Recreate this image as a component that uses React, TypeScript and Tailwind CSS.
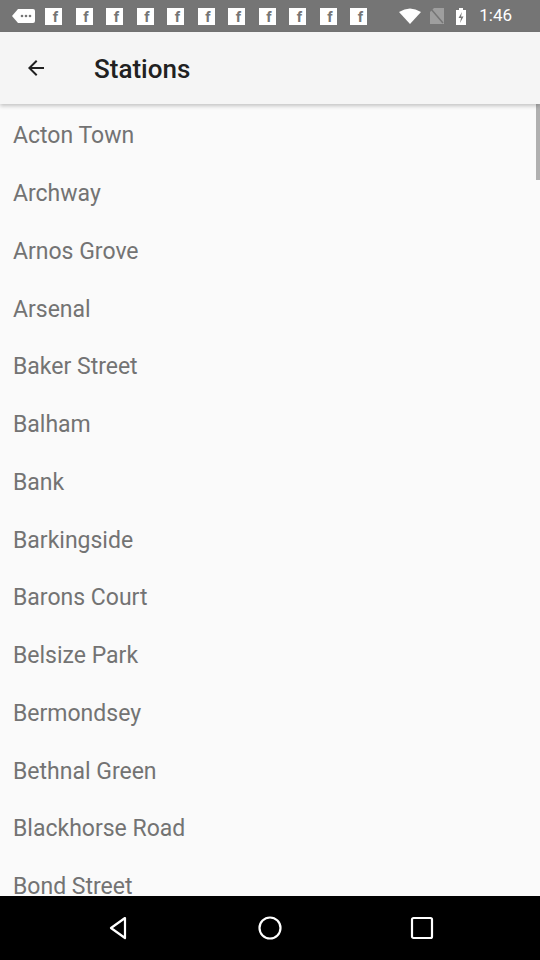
import React from "react";

const stations = [
  "Acton Town",
  "Archway",
  "Arnos Grove",
  "Arsenal",
  "Baker Street",
  "Balham",
  "Bank",
  "Barkingside",
  "Barons Court",
  "Belsize Park",
  "Bermondsey",
  "Bethnal Green",
  "Blackhorse Road",
  "Bond Street",
];

function FbIcon() {
  return (
    <div className="w-[17px] h-[17px] bg-white flex items-end justify-center overflow-hidden">
      <span className="text-[#757575] font-bold text-[15px] leading-[15px] translate-x-[2px]">f</span>
    </div>
  );
}

function StatusBar() {
  return (
    <div className="h-8 bg-[#757575] flex items-center pl-3 pr-[28px] shrink-0">
      <svg width="23" height="14" viewBox="0 0 23 14">
        <path d="M6 0 H21 a2 2 0 0 1 2 2 V12 a2 2 0 0 1 -2 2 H6 L0 7 Z" fill="#fff" />
        <circle cx="10" cy="7" r="1.3" fill="#757575" />
        <circle cx="14" cy="7" r="1.3" fill="#757575" />
        <circle cx="18" cy="7" r="1.3" fill="#757575" />
      </svg>
      <div className="flex gap-[13.5px] ml-[10px]">
        {Array.from({ length: 11 }).map((_, i) => (
          <FbIcon key={i} />
        ))}
      </div>
      <div className="flex-1" />
      <svg width="22" height="16" viewBox="0 0 22 16">
        <path d="M0 4 Q11 -3 22 4 L11 16 Z" fill="#fff" />
      </svg>
      <svg width="14" height="16" viewBox="0 0 14 16" className="ml-[9px]">
        <path d="M4 0 H14 V16 H0 V4 Z" fill="#9e9e9e" />
        <path d="M1 1 L13 15" stroke="#757575" strokeWidth="1.5" />
      </svg>
      <svg width="10" height="17" viewBox="0 0 10 17" className="ml-[12px]">
        <rect x="3" y="0" width="4" height="2" fill="#fff" />
        <rect x="0" y="2" width="10" height="15" fill="#fff" />
        <path d="M6 4 L2.5 10 H5 L4 15 L7.5 8.5 H5 Z" fill="#757575" />
      </svg>
      <span className="ml-[13px] text-white text-[17px]">1:46</span>
    </div>
  );
}

function AppBar() {
  return (
    <div className="h-[72px] bg-[#f5f5f5] flex items-center shrink-0 relative z-10 shadow-[0_2px_4px_rgba(0,0,0,0.22)]">
      <svg width="24" height="24" viewBox="0 0 24 24" className="ml-6">
        <path d="M20 11H7.83l5.59-5.59L12 4l-8 8 8 8 1.41-1.41L7.83 13H20v-2z" fill="#212121" />
      </svg>
      <h1 className="ml-[46px] text-[26px] font-medium text-[#212121] leading-none mt-[2px]">Stations</h1>
    </div>
  );
}

function NavBar() {
  return (
    <div className="h-16 bg-black flex items-center justify-center shrink-0">
      <div className="w-[152px] flex justify-center">
        <svg width="24" height="26" viewBox="0 0 24 26">
          <path d="M19 3 L5 13 L19 23 Z" fill="none" stroke="#fff" strokeWidth="2.2" strokeLinejoin="round" />
        </svg>
      </div>
      <div className="w-[152px] flex justify-center">
        <svg width="26" height="26" viewBox="0 0 26 26">
          <circle cx="13" cy="13" r="10.5" fill="none" stroke="#fff" strokeWidth="2.2" />
        </svg>
      </div>
      <div className="w-[152px] flex justify-center">
        <svg width="24" height="24" viewBox="0 0 24 24">
          <rect x="2" y="2" width="20" height="20" rx="1.5" fill="none" stroke="#fff" strokeWidth="2.2" />
        </svg>
      </div>
    </div>
  );
}

export default function App() {
  return (
    <div className="w-[540px] h-[960px] flex flex-col bg-[#fafafa] overflow-hidden" style={{ fontFamily: "Roboto, 'Noto Sans', sans-serif" }}>
      <StatusBar />
      <AppBar />
      <div className="flex-1 overflow-hidden relative">
        <div className="absolute right-0 top-0 w-[4px] h-[76px] bg-[#b0b0b0]" />
        {stations.map((s) => (
          <div key={s} className="h-[57.75px] flex items-center pl-[13px] pt-[6px]">
            <span className="text-[23px] leading-none text-[#737373]">{s}</span>
          </div>
        ))}
      </div>
      <NavBar />
    </div>
  );
}
